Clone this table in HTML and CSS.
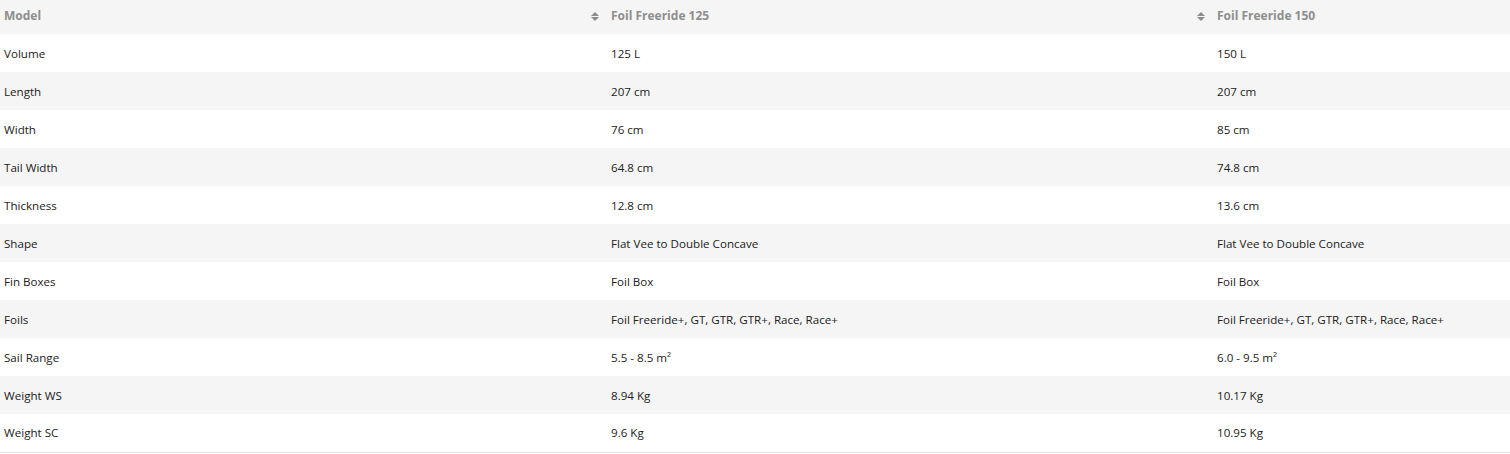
FILE: index.html
```html
<!DOCTYPE html>
<html>
<head>
<meta charset="utf-8">
<link rel="stylesheet" href="styles.css">
</head>
<body>
<table class="specs">
  <colgroup>
    <col class="c1"><col class="c2"><col class="c3">
  </colgroup>
  <thead>
    <tr>
      <th><span>Model</span><svg class="sort" viewBox="0 0 8 9"><path d="M4 0 L8 4 L0 4 Z M0 5 L8 5 L4 9 Z"/></svg></th>
      <th><span>Foil Freeride 125</span><svg class="sort" viewBox="0 0 8 9"><path d="M4 0 L8 4 L0 4 Z M0 5 L8 5 L4 9 Z"/></svg></th>
      <th><span>Foil Freeride 150</span></th>
    </tr>
  </thead>
  <tbody>
    <tr><td>Volume</td><td>125 L</td><td>150 L</td></tr>
    <tr><td>Length</td><td>207 cm</td><td>207 cm</td></tr>
    <tr><td>Width</td><td>76 cm</td><td>85 cm</td></tr>
    <tr><td>Tail Width</td><td>64.8 cm</td><td>74.8 cm</td></tr>
    <tr><td>Thickness</td><td>12.8 cm</td><td>13.6 cm</td></tr>
    <tr><td>Shape</td><td>Flat Vee to Double Concave</td><td>Flat Vee to Double Concave</td></tr>
    <tr><td>Fin Boxes</td><td>Foil Box</td><td>Foil Box</td></tr>
    <tr><td>Foils</td><td>Foil Freeride+, GT, GTR, GTR+, Race, Race+</td><td>Foil Freeride+, GT, GTR, GTR+, Race, Race+</td></tr>
    <tr><td>Sail Range</td><td>5.5 - 8.5 m²</td><td>6.0 - 9.5 m²</td></tr>
    <tr><td>Weight WS</td><td>8.94 Kg</td><td>10.17 Kg</td></tr>
    <tr><td>Weight SC</td><td>9.6 Kg</td><td>10.95 Kg</td></tr>
  </tbody>
</table>
</body>
</html>
```

FILE: styles.css
```css
html, body {
  margin: 0;
  padding: 0;
  background: #ffffff;
}
body {
  font-family: "Open Sans", "Liberation Sans", sans-serif;
  font-size: 11.6px;
  color: #222222;
}
.specs {
  width: 1510px;
  border-collapse: collapse;
  table-layout: fixed;
  border-bottom: 1px solid #e2e2e2;
}
.c1 { width: 607px; }
.c2 { width: 606px; }
.c3 { width: 297px; }
.specs th {
  position: relative;
  height: 34px;
  padding: 0 0 3px 4px;
  box-sizing: border-box;
  text-align: left;
  font-size: 12px;
  font-weight: 700;
  color: #8e8e8e;
  background: #f5f5f5;
  vertical-align: middle;
}
.sort {
  position: absolute;
  right: 8px;
  top: 12px;
  width: 8px;
  height: 9px;
  fill: #8c8c8c;
}
.specs td {
  height: 38px;
  padding: 0 0 0 4px;
  box-sizing: border-box;
  vertical-align: middle;
  white-space: nowrap;
}
.specs tbody tr:nth-child(even) td {
  background: #f5f5f5;
}
```
